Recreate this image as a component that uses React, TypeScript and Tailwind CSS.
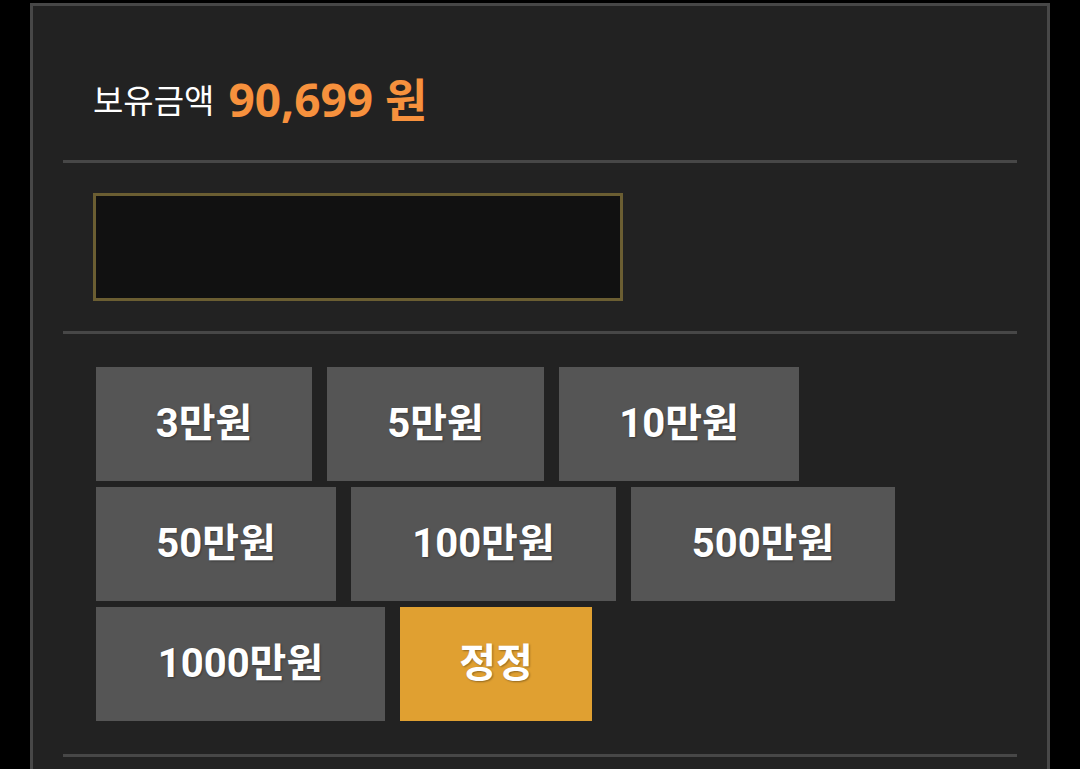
import React from "react";

const rows: { label: string; w: string; accent?: boolean }[][] = [
  [
    { label: "3만원", w: "w-[216px]" },
    { label: "5만원", w: "w-[217px]" },
    { label: "10만원", w: "w-[240px]" },
  ],
  [
    { label: "50만원", w: "w-[240px]" },
    { label: "100만원", w: "w-[265px]" },
    { label: "500만원", w: "w-[264px]" },
  ],
  [
    { label: "1000만원", w: "w-[289px]" },
    { label: "정정", w: "w-[192px]", accent: true },
  ],
];

export default function App() {
  return (
    <div className="min-h-screen bg-black pt-[3px] pl-[30px] overflow-hidden">
      <div className="w-[1020px] min-h-[800px] border-x-[3px] border-t-[3px] border-[#474747] bg-[#222222] px-[30px]">
        <div className="h-[154px] flex items-center pl-[30px] pt-[32px]">
          <span className="text-[33px] leading-none text-white font-['Noto_Sans_CJK_KR',sans-serif]">
            보유금액
          </span>
          <span className="ml-[14px] text-[46px] leading-none font-bold text-[#f7913d] font-['Open_Sans','Noto_Sans_CJK_KR',sans-serif]">
            90,699 원
          </span>
        </div>
        <div className="h-[3px] bg-[#474747]" />
        <div className="pt-[30px] pb-[30px] pl-[30px]">
          <div className="w-[530px] h-[108px] border-[3px] border-[#6b5e32] bg-[#111111]" />
        </div>
        <div className="h-[3px] bg-[#474747]" />
        <div className="pt-[33px] pb-[33px] pl-[33px] flex flex-col gap-[6px]">
          {rows.map((row, i) => (
            <div key={i} className="flex gap-[15px]">
              {row.map((b) => (
                <div
                  key={b.label}
                  className={`${b.w} h-[114px] flex items-center justify-center ${
                    b.accent ? "bg-[#e0a031]" : "bg-[#555555]"
                  } text-white font-bold text-[40px] leading-none font-['Roboto','Noto_Sans_CJK_KR',sans-serif] [text-shadow:1px_1px_2px_rgba(0,0,0,0.35)]`}
                >
                  {b.label}
                </div>
              ))}
            </div>
          ))}
        </div>
        <div className="h-[3px] bg-[#474747]" />
      </div>
    </div>
  );
}
